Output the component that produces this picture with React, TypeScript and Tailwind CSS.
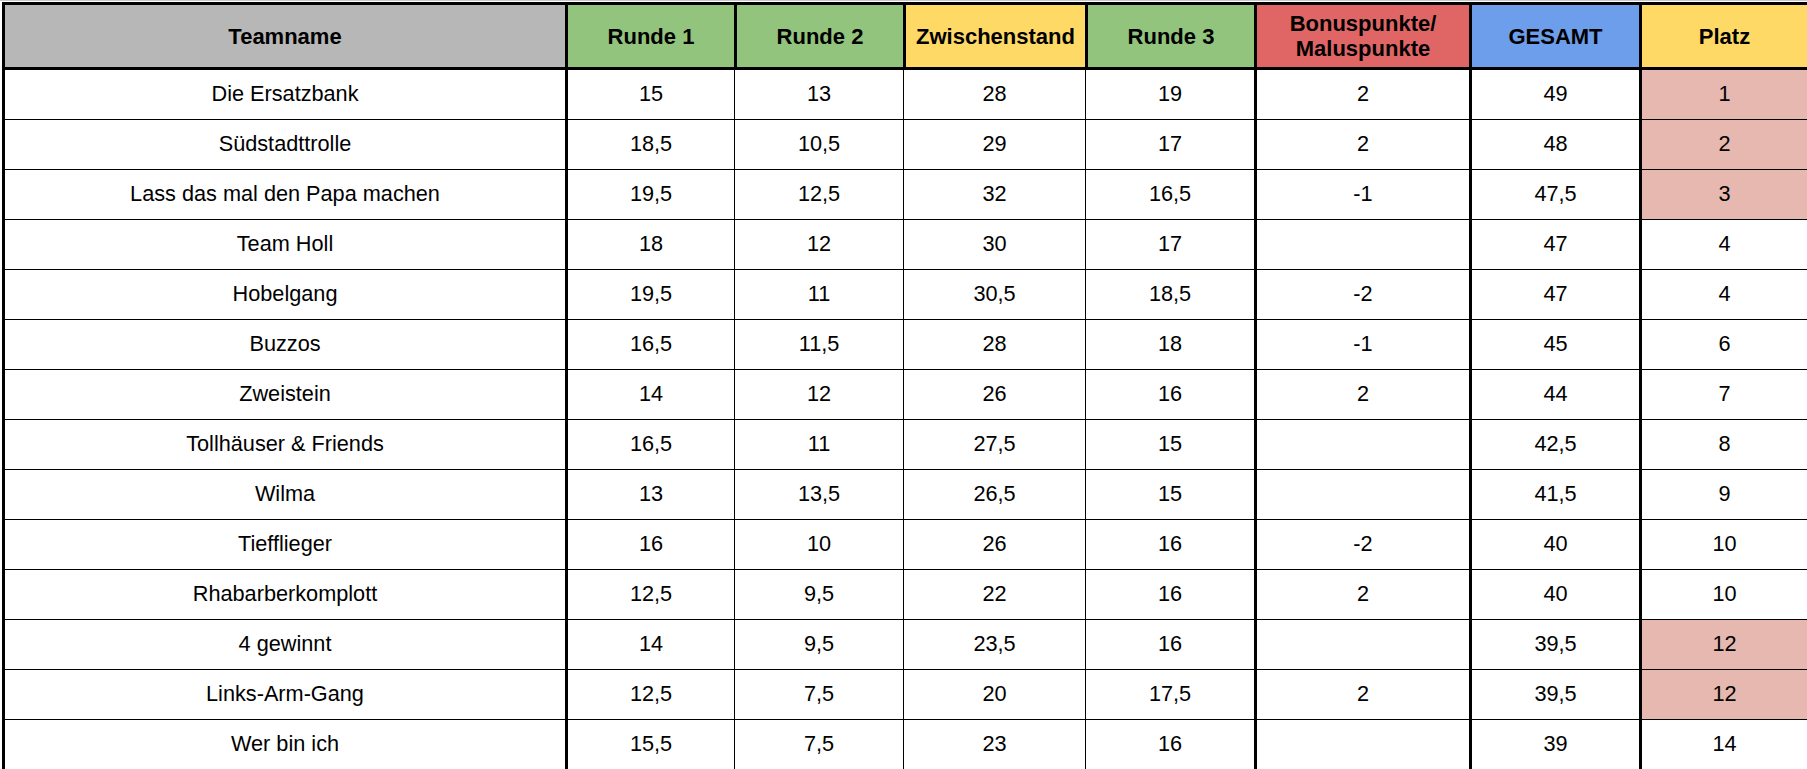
import React from "react";

type Row = { cells: string[]; hl?: boolean };

const rows: Row[] = [
  { cells: ["Die Ersatzbank", "15", "13", "28", "19", "2", "49", "1"], hl: true },
  { cells: ["Südstadttrolle", "18,5", "10,5", "29", "17", "2", "48", "2"], hl: true },
  { cells: ["Lass das mal den Papa machen", "19,5", "12,5", "32", "16,5", "-1", "47,5", "3"], hl: true },
  { cells: ["Team Holl", "18", "12", "30", "17", "", "47", "4"] },
  { cells: ["Hobelgang", "19,5", "11", "30,5", "18,5", "-2", "47", "4"] },
  { cells: ["Buzzos", "16,5", "11,5", "28", "18", "-1", "45", "6"] },
  { cells: ["Zweistein", "14", "12", "26", "16", "2", "44", "7"] },
  { cells: ["Tollhäuser & Friends", "16,5", "11", "27,5", "15", "", "42,5", "8"] },
  { cells: ["Wilma", "13", "13,5", "26,5", "15", "", "41,5", "9"] },
  { cells: ["Tiefflieger", "16", "10", "26", "16", "-2", "40", "10"] },
  { cells: ["Rhabarberkomplott", "12,5", "9,5", "22", "16", "2", "40", "10"] },
  { cells: ["4 gewinnt", "14", "9,5", "23,5", "16", "", "39,5", "12"], hl: true },
  { cells: ["Links-Arm-Gang", "12,5", "7,5", "20", "17,5", "2", "39,5", "12"], hl: true },
  { cells: ["Wer bin ich", "15,5", "7,5", "23", "16", "", "39", "14"] },
];

const widths = [
  "w-[563px]",
  "w-[169px]",
  "w-[169px]",
  "w-[182px]",
  "w-[169px]",
  "w-[215px]",
  "w-[170px]",
  "w-[168px]",
];

const bodyBorders = [
  "border-l-[3px]",
  "border-l-[3px]",
  "border-l",
  "border-l",
  "border-l",
  "border-l-[3px]",
  "border-l-[3px]",
  "border-l-[3px]",
];

const headers: { label: React.ReactNode; bg: string }[] = [
  { label: "Teamname", bg: "bg-[#b7b7b7]" },
  { label: "Runde 1", bg: "bg-[#93c47d]" },
  { label: "Runde 2", bg: "bg-[#93c47d]" },
  { label: "Zwischenstand", bg: "bg-[#ffd966]" },
  { label: "Runde 3", bg: "bg-[#93c47d]" },
  {
    label: (
      <span className="leading-[25px]">
        Bonuspunkte/
        <br />
        Maluspunkte
      </span>
    ),
    bg: "bg-[#e06666]",
  },
  { label: "GESAMT", bg: "bg-[#6d9eeb]" },
  { label: "Platz", bg: "bg-[#ffd966]" },
];

export default function App() {
  return (
    <div className="w-[1807px] h-[769px] overflow-hidden bg-white font-['Liberation_Sans',Arial,sans-serif] text-black">
      <div className="h-[1px] bg-[#c8c8c8]" />
      <div className="h-[1px] bg-white" />
      <div className="pl-[2px] flex flex-col w-[1900px]">
        {/* header */}
        <div className="flex h-[68px] border-t-[3px] border-b-[3px] border-black">
          {headers.map((h, i) => (
            <div
              key={i}
              className={`${widths[i]} ${h.bg} shrink-0 border-l-[3px] border-black flex items-center justify-center text-center font-bold text-[22px]`}
            >
              {h.label}
            </div>
          ))}
        </div>
        {/* body */}
        {rows.map((r, ri) => (
          <div key={ri} className="flex h-[50px] border-b border-black">
            {r.cells.map((c, ci) => (
              <div
                key={ci}
                className={`${widths[ci]} ${bodyBorders[ci]} shrink-0 border-black flex items-center justify-center text-[21.7px] ${
                  ci === 7 && r.hl ? "bg-[#e6b8af]" : "bg-white"
                }`}
              >
                {c}
              </div>
            ))}
          </div>
        ))}
      </div>
    </div>
  );
}
